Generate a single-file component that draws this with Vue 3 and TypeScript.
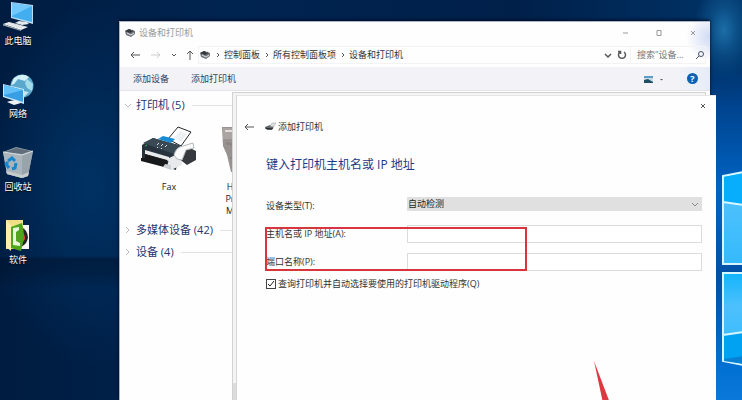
<script setup lang="ts">
import { ref } from 'vue'

interface Shortcut {
  id: 'pc' | 'network' | 'bin' | 'folder'
  label: string
}

const shortcuts: Shortcut[] = [
  { id: 'pc', label: '此电脑' },
  { id: 'network', label: '网络' },
  { id: 'bin', label: '回收站' },
  { id: 'folder', label: '软件' },
]

const crumbs: string[] = ['控制面板', '所有控制面板项', '设备和打印机']

const search = ref('')
const deviceType = ref('auto')
const host = ref('')
const port = ref('')
const queryDriver = ref(true)
</script>

<template>
  <div class="desktop">
    <svg class="logo" viewBox="0 0 32 400" aria-hidden="true">
      <defs>
        <linearGradient id="pane" x1="0" y1="0" x2="0" y2="1">
          <stop offset="0" stop-color="#12b4fb" />
          <stop offset="0.35" stop-color="#4cc0fc" />
          <stop offset="1" stop-color="#35bafc" />
        </linearGradient>
        <linearGradient id="glow" x1="0" y1="0" x2="0" y2="1">
          <stop offset="0" stop-color="#003a7c" stop-opacity="0" />
          <stop offset="0.15" stop-color="#00428c" />
          <stop offset="0.4" stop-color="#0064c4" />
          <stop offset="0.65" stop-color="#0050a4" />
          <stop offset="0.9" stop-color="#0070d2" />
          <stop offset="1" stop-color="#0a78da" />
        </linearGradient>
      </defs>
      <path d="M0 50H32V400H0Z" fill="url(#glow)" />
      <path d="M13 176L34 172V264H13Z" fill="url(#pane)" stroke="#d8f6ff" stroke-width="2" />
      <path d="M14 177L34 173V205L14 202Z" fill="#08adfb" />
      <path d="M13 202L34 205" stroke="#d8f6ff" stroke-width="2" />
      <path d="M13 273H34V365L13 361Z" fill="url(#pane)" stroke="#d8f6ff" stroke-width="2" />
      <path d="M14 335L34 332V364L14 360Z" fill="#02a2f2" />
      <path d="M14 359L34 356V364L14 361Z" fill="#0880d4" />
      <path d="M13 335L34 332" stroke="#d8f6ff" stroke-width="2" />
    </svg>

    <nav class="shortcuts">
      <a v-for="item in shortcuts" :key="item.id" class="shortcut" href="#">
        <svg v-if="item.id === 'pc'" class="big" viewBox="0 0 32 31" aria-hidden="true">
          <path d="M9 1L31 4V23L9 17Z" fill="#b9dcf2" />
          <path d="M10 2L30 5V21L10 16Z" fill="#42aef0" />
          <path d="M10 2L30 5L10 15Z" fill="#72c8fa" />
          <path d="M17 20L25 21L27 23L20 24L13 22Z" fill="#e3e8ec" />
          <path d="M1 23L7 21L26 26L19 29Z" fill="#f1f3f4" />
          <path d="M1 23L19 29V30L1 24.500Z" fill="#9ba7b2" />
          <path d="M5 23L20 27M8 22L23 26" stroke="#adb6be" stroke-width=".4" />
        </svg>
        <svg v-else-if="item.id === 'network'" class="big" viewBox="0 0 32 31" aria-hidden="true">
          <circle cx="20" cy="12" r="11.500" fill="#5aa9cd" />
          <path d="M12 4Q20-2 27 3L23 7L16 5L12 10L9 11Z" fill="#d5f1f7" />
          <path d="M25 5L31 10L30 17L25 14L23 9Z" fill="#a5dceb" />
          <path d="M21 17L27 18L22 23H18Z" fill="#c5e6ed" />
          <path d="M1 10L22 15V30L1 23Z" fill="#c9e8f8" />
          <path d="M2 11L21 16V28L2 22Z" fill="#389fe4" />
          <path d="M2 11L21 16L2 21Z" fill="#63c1f7" />
          <path d="M8 27L14 26L19 29L12 31L5 28Z" fill="#f0f3f5" />
        </svg>
        <svg v-else-if="item.id === 'bin'" class="big" viewBox="0 0 32 31" aria-hidden="true">
          <path d="M1 5L14 0L31 4L26 29L20 31L5 27Z" fill="#8f9ba5" />
          <path d="M1 5L20 8L20 31L5 27Z" fill="#a9b4bc" />
          <path d="M20 8L31 4L26 29L20 31Z" fill="#98a3ab" />
          <path d="M3 5L14 1L29 4L20 7Z" fill="#5f6e7a" />
          <path d="M1 5L20 8L31 4" fill="none" stroke="#d6dde1" />
          <path d="M6 14L10 11L13 14M14 16L13 21L10 22M7 21L4 17L6 15" fill="none" stroke="#1687cf" stroke-width="3" />
          <path d="M4 24L20 28L27 25L26 29L20 31L5 27Z" fill="#c8cccd" />
        </svg>
        <svg v-else class="big" viewBox="0 0 32 31" aria-hidden="true">
          <path d="M4 0H21V29H4Z" fill="#f1df88" />
          <path d="M18 5H27V29H18Z" fill="#f7f8f7" />
          <path d="M19 7Q26 10 26 18Q24 26 18 27Z" fill="#24262a" />
          <path d="M20 11Q26 18 20 23Z" fill="#e64a34" />
          <path d="M4 0L9 5V31L4 27Z" fill="#fbefaa" />
          <path d="M9 7L20 3Q24 15 19 31L9 28Z" fill="#51a51d" />
          <path d="M11 8L17 7V10L14 12V21L18 23V26L11 25Z" fill="#e8f6dc" />
        </svg>
        <span>{{ item.label }}</span>
      </a>
    </nav>

    <section class="window explorer">
      <header class="titlebar">
        <svg class="mini" viewBox="0 0 12 10" aria-hidden="true">
          <path d="M1 3L5 1L11 3L11 6L7 9L2 7Z" fill="#70757a" />
          <path d="M1 3L5 1L10 3L6 5Z" fill="#34393e" />
          <path d="M3 5L7 7L10 5M7 2L9 1" stroke="#e2e4e6" fill="none" />
        </svg>
        <span class="caption">设备和打印机</span>
        <div class="controls">
          <button type="button" aria-label="最小化"><svg viewBox="0 0 10 10"><path d="M3 5H8" /></svg></button>
          <button type="button" aria-label="最大化"><svg viewBox="0 0 10 10"><path d="M3 2.500H7V7.500H3Z" /></svg></button>
          <button type="button" aria-label="关闭"><svg viewBox="0 0 10 10"><path d="M3 3L7 7M7 3L3 7" /></svg></button>
        </div>
      </header>

      <div class="navbar">
        <button class="nav" type="button" aria-label="后退"><svg viewBox="0 0 12 10"><path d="M11 5H2M5 2L2 5L5 8" /></svg></button>
        <button class="nav faded" type="button" aria-label="前进"><svg viewBox="0 0 12 10"><path d="M1 5H10M7 2L10 5L7 8" /></svg></button>
        <button class="nav slim" type="button" aria-label="最近"><svg viewBox="0 0 12 10"><path d="M4 4L6 6L8 4" /></svg></button>
        <button class="nav slim" type="button" aria-label="上移"><svg viewBox="0 0 12 10"><path d="M6 10V1M3 4L6 1L9 4" /></svg></button>
        <div class="address">
          <svg class="mini" viewBox="0 0 12 10" aria-hidden="true">
            <path d="M1 3L5 1L11 3L11 6L7 9L2 7Z" fill="#70757a" />
            <path d="M1 3L5 1L10 3L6 5Z" fill="#34393e" />
            <path d="M3 5L7 7L10 5M7 2L9 1" stroke="#e2e4e6" fill="none" />
          </svg>
          <template v-for="crumb in crumbs" :key="crumb">
            <svg class="sep" viewBox="0 0 13 10" aria-hidden="true"><path d="M6 3L8 5L6 7" /></svg>
            <a class="crumb" href="#">{{ crumb }}</a>
          </template>
          <button class="nav slim end" type="button" aria-label="展开"><svg viewBox="0 0 12 10"><path class="bold" d="M3 4L6 7L9 4" /></svg></button>
          <button class="nav slim" type="button" aria-label="刷新"><svg viewBox="0 0 12 10"><path class="bold" d="M8 2A3.500 3.500 0 1 1 4 2M2 1.500H4.500V4" /></svg></button>
        </div>
        <div class="search">
          <input v-model="search" type="text" aria-label="搜索" placeholder="搜索&quot;设备..." />
          <svg class="glass" viewBox="0 0 10 10" aria-hidden="true"><circle cx="6" cy="4" r="2.500" /><path d="M4 6L1 9" /></svg>
        </div>
      </div>

      <div class="toolbar">
        <button type="button">添加设备</button>
        <button type="button">添加打印机</button>
        <button class="view" type="button" aria-label="更改视图">
          <svg viewBox="0 0 22 10">
            <path d="M1 2H10V9H1Z" fill="#c9dce7" />
            <path d="M1 2H10V4H1Z" fill="#5c9cc7" />
            <path d="M1 6L5 5L10 8V9H1Z" fill="#1e4f66" />
            <path d="M17 5H20L18.500 6.500Z" fill="#555" />
          </svg>
        </button>
        <button class="help" type="button" aria-label="帮助">?</button>
      </div>

      <main class="content">
        <h2 class="group">
          <svg viewBox="0 0 8 8" aria-hidden="true"><path d="M1 3L4 6L7 3" /></svg>
          <span>打印机 (5)</span>
        </h2>
        <div class="devices">
          <figure class="device">
            <svg viewBox="0 0 58 46" aria-hidden="true">
              <path d="M28 13L38 1L51 6L41 20Z" fill="#fff" stroke="#25282b" />
              <path d="M34 12L40 5L47 8L41 16Z" fill="#eef1f3" />
              <path d="M2 19L13 12L42 20L38 30L36 44L2 34Z" fill="#26333c" />
              <path d="M3 17L13 12L42 20L34 28Z" fill="#394a54" />
              <path d="M18 13L23 10L35 13L31 17Z" fill="#178cd6" />
              <path d="M17 19L19 17M21 20L23 18M25 21L27 19M17 22L18 21M21 23L22 22" stroke="#d4dce0" />
              <path d="M29 32L42 26L42 39L31 44L27 42Z" fill="#e7e9ea" />
              <path d="M5 24L29 31V35L5 28Z" fill="#e7e9ea" />
              <path d="M5 28L27 34V40L24 41L1 35V32L5 32Z" fill="#17191b" />
              <path d="M25 38L31 39V44L23 41Z" fill="#cdd1d4" />
              <path d="M37 24L46 20L56 25V34L47 39L38 32Z" fill="#363a3e" />
              <path d="M34 29Q36 21 43 20L53 17L54 22L46 24L42 34L37 33Z" fill="#fafafa" stroke="#b6babd" />
              <path d="M5 20L7 19" stroke="#28b84b" />
            </svg>
            <figcaption>Fax</figcaption>
          </figure>
          <figure class="device partial">
            <svg viewBox="0 0 16 46" aria-hidden="true">
              <path d="M0 1H16V46H9L5 29L1 20Z" fill="#97918f" />
              <path d="M1 2H16V13H1Z" fill="#aaa5a2" />
              <path d="M3 5H14" stroke="#e1dedb" stroke-width="2" />
              <path d="M4 17L16 20M8 32H16" stroke="#8a8482" stroke-width="2" />
            </svg>
            <figcaption>
              <span>H</span>
              <span>Pr</span>
              <span>M</span>
            </figcaption>
          </figure>
        </div>
        <h2 class="group closed">
          <svg viewBox="0 0 8 8" aria-hidden="true"><path d="M2 1L5 4L2 7" /></svg>
          <span>多媒体设备 (42)</span>
        </h2>
        <h2 class="group closed">
          <svg viewBox="0 0 8 8" aria-hidden="true"><path d="M2 1L5 4L2 7" /></svg>
          <span>设备 (4)</span>
        </h2>
      </main>
    </section>

    <div class="backframe"></div>

    <section class="window dialog" role="dialog" aria-labelledby="heading">
      <div class="dialog-top">
        <button type="button" aria-label="关闭"><svg viewBox="0 0 10 10"><path d="M3 3L7 7M7 3L3 7" /></svg></button>
      </div>
      <div class="dialog-nav">
        <button class="nav" type="button" aria-label="返回"><svg viewBox="0 0 12 10"><path d="M11 5H2M5 2L2 5L5 8" /></svg></button>
        <svg class="mini" viewBox="0 0 12 10" aria-hidden="true">
          <path d="M1 5L6 3L10 4L8 8L3 8Z" fill="#64696d" />
          <path d="M6 4L8 1L12 1L9 5Z" fill="#dfe2e4" stroke="#999" stroke-width=".5" />
          <path d="M1 6L7 7L9 6" stroke="#202326" fill="none" />
        </svg>
        <span>添加打印机</span>
      </div>
      <form class="form" @submit.prevent>
        <h1 id="heading">键入打印机主机名或 IP 地址</h1>
        <div class="fields">
          <label for="type">设备类型(T):</label>
          <div class="picker">
            <select id="type" v-model="deviceType">
              <option value="auto">自动检测</option>
            </select>
            <svg viewBox="0 0 10 10" aria-hidden="true"><path d="M2 4L5 7L8 4" /></svg>
          </div>
          <label for="host">主机名或 IP 地址(A):</label>
          <input id="host" v-model="host" type="text" />
          <label for="port">端口名称(P):</label>
          <input id="port" v-model="port" type="text" />
        </div>
        <label class="check">
          <input v-model="queryDriver" type="checkbox" />
          <svg viewBox="0 0 10 10" aria-hidden="true"><path v-if="queryDriver" d="M2 5L4 7L8 2" /></svg>
          <span>查询打印机并自动选择要使用的打印机驱动程序(Q)</span>
        </label>
      </form>
    </section>

    <div class="highlight"></div>
    <svg class="pointer" viewBox="0 0 20 40" aria-hidden="true">
      <path d="M1 0L17 42H10Z" fill="#dc3a40" />
    </svg>
  </div>
</template>

<style>
body {
  margin: 0;
}
</style>

<style scoped>
.desktop {
  position: relative;
  min-height: 100vh;
  overflow: hidden;
  box-sizing: border-box;
  padding: 1px 2px;
  font: 9px/12px "Open Sans", "Noto Sans CJK SC", sans-serif;
  color: #333;
  background:
    radial-gradient(ellipse 30px 50px at calc(100% - 18px) 30px, #1c6ea8 0%, #14649f88 45%, transparent 100%),
    linear-gradient(180deg, transparent 256px, #00122c88 259px, #00122c66 272px, transparent 290px),
    radial-gradient(ellipse 110px 180px at 90px 185px, #003264 0%, transparent 100%),
    linear-gradient(90deg, #001c40, #002450 30%, #00204a 70%, #003468);
}
button {
  display: grid;
  place-items: center;
  padding: 0;
  border: 0;
  background: none;
  font: inherit;
  color: inherit;
}
svg {
  display: block;
  flex: none;
}
a {
  color: inherit;
  text-decoration: none;
}
.logo {
  position: absolute;
  top: 0;
  right: 0;
  width: 32px;
  height: 400px;
}
.shortcuts {
  display: flex;
  flex-direction: column;
  gap: 27px;
  width: 32px;
}
.shortcut {
  display: flex;
  flex-direction: column;
  align-items: center;
  gap: 3px;
  color: #fff;
  white-space: nowrap;
  text-shadow: 0 1px 1px #000;
}
.big {
  width: 32px;
  height: 31px;
}
.window {
  position: absolute;
  bottom: 0;
  background: #fefefe;
}
.explorer {
  top: 21px;
  left: 119px;
  right: 32px;
  border: 1px solid #aab4c4;
  border-bottom: 0;
  border-right: 0;
  box-sizing: border-box;
  background: radial-gradient(circle at 100% 15px, #d0daf4 0, transparent 24px), #fefefe;
  box-shadow: 0 -1px 3px #000a22;
}
.titlebar {
  display: flex;
  align-items: center;
  gap: 3px;
  height: 21px;
  padding-left: 4px;
  color: #999;
}
.mini {
  width: 12px;
  height: 10px;
}
.controls {
  display: flex;
  margin-left: auto;
}
.controls button {
  width: 34px;
  height: 21px;
}
.controls svg,
.dialog-top svg {
  width: 10px;
  height: 10px;
  fill: none;
  stroke: #999;
}
.navbar {
  display: flex;
  align-items: center;
  height: 24px;
  padding: 0 4px;
}
.nav {
  width: 21px;
  height: 18px;
}
.nav svg {
  width: 12px;
  height: 10px;
  fill: none;
  stroke: #555;
}
.nav.faded svg {
  stroke: #ccc;
}
.nav.slim {
  width: 16px;
}
.nav.slim.end {
  width: 12px;
  margin-left: auto;
}
.bold {
  stroke-width: 1.5px;
}
.address {
  display: flex;
  align-items: center;
  flex: 1;
  height: 18px;
  border: 1px solid #f3f3f3;
  border-right: 0;
  box-sizing: border-box;
}
.sep {
  width: 13px;
  height: 10px;
  fill: none;
  stroke: #555;
}
.crumb {
  color: #333;
  white-space: nowrap;
}
.search {
  display: flex;
  align-items: center;
  width: 76px;
  height: 18px;
  border: 1px solid #f3f3f3;
  box-sizing: border-box;
  padding-left: 6px;
}
.search input {
  flex: 1;
  min-width: 0;
  padding: 0;
  border: 0;
  outline: 0;
  background: none;
  font: inherit;
}
.search input::placeholder {
  color: #777;
}
.glass {
  width: 10px;
  height: 10px;
  fill: none;
  stroke: #44506c;
}
.toolbar {
  display: flex;
  align-items: center;
  gap: 22px;
  height: 23px;
  padding: 0 12px 0 13px;
  background: linear-gradient(90deg, #f3f3f7 94%, #e6ecf7);
  border-bottom: 1px solid #e4e4e8;
  color: #2c4264;
}
.view {
  margin-left: auto;
}
.view svg {
  width: 22px;
  height: 10px;
}
.toolbar .help {
  width: 11px;
  height: 11px;
  border-radius: 50%;
  background: #0b62b5;
  color: #fff;
  line-height: 11px;
  font-weight: 700;
}
.content {
  padding: 4px 0 0 4px;
}
.group {
  display: flex;
  align-items: center;
  gap: 4px;
  width: 108px;
  height: 20px;
  margin: 0 0 2px;
  font-size: 11px;
  line-height: 16px;
  font-weight: 400;
  color: #26346f;
  white-space: nowrap;
}
.group::after {
  content: "";
  flex: 1;
  height: 1px;
  margin-left: 3px;
  background: #e2e2e6;
}
.group svg {
  width: 8px;
  height: 8px;
  fill: none;
  stroke: #bbb;
}
.devices {
  display: flex;
  gap: 24px;
  height: 103px;
  padding: 9px 0 0 16px;
  box-sizing: border-box;
}
.device {
  display: flex;
  flex-direction: column;
  align-items: center;
  gap: 9px;
  width: 58px;
  margin: 0;
  color: #222;
}
.device svg {
  height: 46px;
  width: 58px;
}
.device figcaption {
  display: flex;
  flex-direction: column;
  align-items: center;
}
.device.partial {
  width: 16px;
}
.device.partial svg {
  width: 16px;
}
.backframe {
  position: absolute;
  top: 92px;
  left: 232px;
  right: 36px;
  bottom: 0;
  border: 1px solid #d2d2d4;
  border-bottom: 0;
  background: linear-gradient(180deg, #f4f4f5 290px, #dcdcdd 290px);
}
.dialog {
  top: 95px;
  left: 236px;
  right: 26px;
  border-left: 1px solid #d6d6d8;
  border-top: 1px solid #e6e6e8;
  box-sizing: border-box;
}
.dialog-top {
  display: flex;
  justify-content: flex-end;
  padding-right: 4px;
}
.dialog-top button {
  width: 18px;
  height: 19px;
}
.dialog-top svg {
  stroke: #555;
}
.dialog-nav {
  display: flex;
  align-items: center;
  gap: 2px;
  height: 24px;
  padding-left: 1px;
}
.dialog-nav .nav {
  margin-right: 3px;
}
.form {
  padding: 16px 14px 0 29px;
}
h1 {
  margin: 0 0 22px;
  font-size: 12px;
  line-height: 20px;
  font-weight: 400;
  color: #1f3a86;
}
.fields {
  display: grid;
  grid-template-columns: 131px 1fr;
  grid-auto-rows: 18px;
  row-gap: 10px;
  column-gap: 10px;
  align-items: center;
}
.fields input {
  height: 18px;
  min-width: 0;
  padding: 0 2px;
  border: 1px solid #dcdcdc;
  box-sizing: border-box;
  background: #fff;
  font: inherit;
}
.picker {
  display: grid;
  align-self: start;
  align-items: center;
  background: #e0e0e0;
}
.picker select,
.picker svg {
  grid-area: 1 / 1;
}
.picker select {
  appearance: none;
  height: 14px;
  padding: 0 1px;
  border: 0;
  border-radius: 0;
  background: none;
  font: inherit;
  color: #222;
}
.picker svg {
  justify-self: end;
  width: 10px;
  height: 10px;
  margin-right: 2px;
  fill: none;
  stroke: #888;
  pointer-events: none;
}
.check {
  display: grid;
  grid-template-columns: 10px auto;
  justify-content: start;
  align-items: center;
  column-gap: 2px;
  margin-top: 7px;
  white-space: nowrap;
}
.check input {
  grid-area: 1 / 1;
  appearance: none;
  width: 10px;
  height: 10px;
  margin: 0;
  border: 1px solid #444;
  box-sizing: border-box;
}
.check svg {
  grid-area: 1 / 1;
  width: 10px;
  height: 10px;
  fill: none;
  stroke: #222;
  pointer-events: none;
}
.highlight {
  position: absolute;
  top: 227px;
  left: 265px;
  width: 262px;
  height: 44px;
  border: 2px solid #d8353d;
  box-sizing: border-box;
  pointer-events: none;
}
.pointer {
  position: absolute;
  top: 361px;
  left: 593px;
  width: 20px;
  height: 40px;
}
</style>
